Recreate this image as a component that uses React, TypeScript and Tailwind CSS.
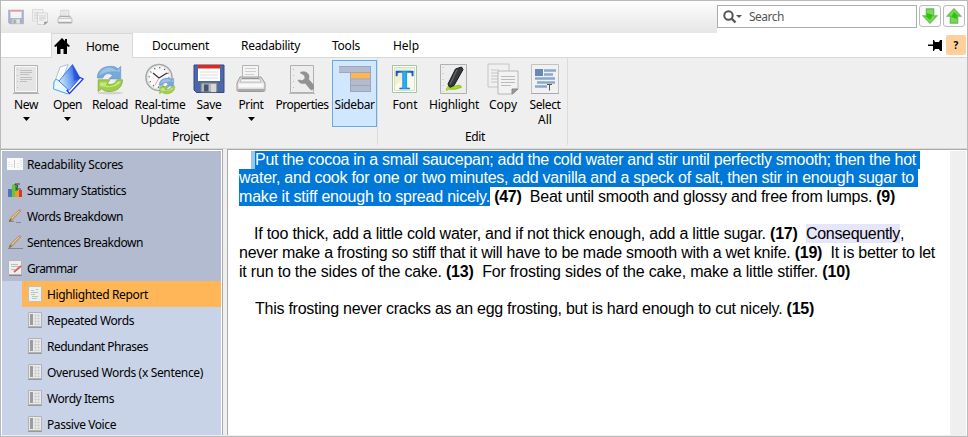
import React, { useLayoutEffect, useRef, useState } from 'react';

const UI = "font-['Noto_Sans','Open_Sans',sans-serif]";

/** One line of text, tracked so that it fills the given width. */
function Fit({ w, children, className = '' }: { w: number; children: React.ReactNode; className?: string }) {
  const ref = useRef<HTMLSpanElement>(null);
  const [ls, setLs] = useState(0);
  useLayoutEffect(() => {
    const el = ref.current;
    if (!el) return;
    const n = (el.textContent || '').length;
    el.style.letterSpacing = '0px';
    const v = (w - el.getBoundingClientRect().width) / n;
    el.style.letterSpacing = v + 'px';
    setLs(v);
  }, [w]);
  return (
    <span ref={ref} className={'inline-block whitespace-pre ' + className} style={{ letterSpacing: ls }}>
      {children}
    </span>
  );
}

type IP = { className?: string };

const Floppy = ({ className = 'size-8' }: IP) => (
  <svg viewBox="0 0 32 32" className={className}>
    <path d="M1 2h30v27.500H3.500L1 27z" fill="#4c67a8" stroke="#34497f" />
    <path d="M5 2h22v16H5z" fill="#fff" />
    <path d="M5 2h22v3.500H5z" fill="#de2a1c" />
    <path d="M7 9h18M7 12h18M7 15h18" stroke="#ddd" />
    <path d="M8 20h16v9H8z" fill="#b4b9bd" stroke="#737a85" />
    <path d="M11 21.500h4.500v7H11z" fill="#46536c" />
    <path d="M18 21h5v8h-5z" fill="#d8d9d6" />
  </svg>
);
const Printer = ({ className = 'size-8' }: IP) => (
  <svg viewBox="0 0 32 32" className={className}>
    <path d="M7.500 2.500h16v13h-16z" fill="#f4f4f4" stroke="#b4b4b4" />
    <path d="M10 5.500h11M10 8.500h11M10 11.500h9" stroke="#cecece" />
    <path d="M5 14h21l4 6v7q0 1.500-1.500 1.500h-25Q2 28.500 2 27v-7z" fill="#ddd" stroke="#9a9a9a" />
    <path d="M7 15h17l2 3.500H5z" fill="#8b8b8b" />
    <path d="M6 16h19l1 3H5z" fill="#f6f6f6" stroke="#aaa" strokeWidth=".6" />
    <path d="M3.500 20.500h25v4h-25z" fill="#f9f9f9" />
    <path d="M3 27h26" stroke="#aaa" strokeWidth="2" />
  </svg>
);
const Pages = ({ className = 'size-8' }: IP) => (
  <svg viewBox="0 0 32 32" className={className}>
    <path d="M1 1h21v23H1z" fill="#f0f0f0" stroke="#c4c4c4" />
    <path d="M4 7h8M4 10h8M4 13h8M4 16h8M4 19h8" stroke="#c6c6c6" />
    <path d="M11 8h20v18l-5 5H11z" fill="#f2f2f2" stroke="#b8b8b8" />
    <path d="M14 13.500h14M14 16.500h14M14 19.500h14M14 22.500h10" stroke="#bababa" />
    <path d="M31 26h-6v5z" fill="#999" stroke="#888" />
  </svg>
);
const NewDoc = () => (
  <svg viewBox="0 0 32 32" className="size-8">
    <path d="M4.500 2.500h23v27h-23z" fill="#e5e5e5" stroke="#b2b2b2" />
    <path d="M5.500 3.500h21v25h-21z" fill="none" stroke="#f9f9f9" />
    <path d="M10 7.500h12M10 9.500h12M10 11.500h9M10 14.500h12M10 16.500h12M10 18.500h7" stroke="#c0c0c0" />
    <path d="M7.500 6v20" stroke="#bbb" strokeDasharray="1 5" />
    <path d="M3 30.500h26" stroke="#b2b2b2" />
  </svg>
);
const OpenBook = () => (
  <svg viewBox="0 0 32 32" className="size-8">
    <defs>
      <linearGradient id="book" x1="0" y1=".6" x2="1" y2=".3">
        <stop stopColor="#d3ecff" /><stop offset=".45" stopColor="#75abf5" /><stop offset="1" stopColor="#1740d8" />
      </linearGradient>
    </defs>
    <path d="M8 4l8-2.500-5 14L2 21z" fill="#fbfdff" stroke="#a8c4e2" />
    <path d="M2 19l2-3 14 9-2 6L1.500 26z" fill="#e6f7ff" stroke="#44a4ee" />
    <path d="M28 14.500l3 1.500-13.500 14.500-2.500-3z" fill="#fff" stroke="#2a3cf2" strokeWidth="1.300" />
    <path d="M20.500 1.500L28 15 17 27.500 7 18z" fill="url(#book)" stroke="#2b63e0" strokeWidth=".8" />
    <path d="M20.500 1.500L28 15l-6 3z" fill="#1c46d8" opacity=".55" />
  </svg>
);
const ReloadArt = () => (
  <>
    <path d="M2 15C2 6 9 2 17 2c4 0 6 1 8 3l3-3v14H15l4-4c-5-4-9-1-11 3z" fill="#76a9d8" stroke="#6c9ac6" strokeWidth=".8" />
    <path d="M4 12C6 5 13 2 19 4l5 3 3-3v4q-12-2-23 4" fill="#9cc2e5" />
    <path d="M30 17c0 9-7 13-15 13-4 0-6-1-8-3l-4 3V17h13l-3 4c5 3 9 0 11-4z" fill="#9fcf45" stroke="#7aa83c" strokeWidth=".8" />
    <path d="M5 20h8l-2 3c5 3 11 0 14-4h3c-2 5-12 8-23 5z" fill="#c9e583" />
  </>
);
const Reload = () => (
  <svg viewBox="0 0 32 32" className="size-8">
    <ellipse cx="16" cy="30" rx="13" ry="1.500" fill="#d3d3d3" />
    <g transform="translate(1.500 1.500) scale(.9)"><ReloadArt /></g>
  </svg>
);
const Clock = () => (
  <svg viewBox="0 0 32 32" className="size-8">
    <circle cx="15" cy="14.500" r="13" fill="#fafafa" stroke="#a8a8a8" strokeWidth="1.600" />
    <circle cx="15" cy="14.500" r="11.600" fill="none" stroke="#e0e0e0" />
    <circle cx="15" cy="14.500" r="9.800" fill="none" stroke="#555" strokeWidth="1.500" strokeDasharray="1 4.130" />
    <path d="M9 10l6 5 8-5" fill="none" stroke="#333" strokeWidth="1.200" />
    <path d="M15 15l-4 7" stroke="#e99" />
    <g transform="translate(14 14) scale(.56)"><ReloadArt /></g>
  </svg>
);
const Properties = () => (
  <svg viewBox="0 0 32 32" className="size-8">
    <path d="M4.500 2.500h23v27h-23z" fill="#ededed" stroke="#b0b0b0" />
    <path d="M7.500 6v20" stroke="#bbb" strokeDasharray="1 5" />
    <path d="M14 9.500c4-2 9 0 9 4 0 1 0 1.500-.5 2.500l5 6v4l-2.500 1-6-7c-3 1.500-6 0-7-3l4.500.5 2.500-2-.5-3z" fill="#929292" stroke="#858585" strokeWidth=".5" />
    <path d="M3 30.500h26" stroke="#b9b9b9" />
  </svg>
);
const SidebarIcon = () => (
  <svg viewBox="0 0 32 32" className="size-8">
    <path d="M0 3h32v7H0z" fill="#b3bbd0" /><path d="M11 10h21v6H11z" fill="#ffb652" />
    <path d="M11 16h21v13H11z" fill="#b3bbd0" />
    <path d="M0 3.500h32M0 9.500h32M11 16h21M11 22.500h21M11 28.500h21M11.500 10v19M31.500 3v26" stroke="#9ea6b9" />
  </svg>
);
const FontIcon = () => (
  <svg viewBox="0 0 32 32" className="size-8">
    <defs><linearGradient id="tee" x1="0" x2="1"><stop stopColor="#0729be" /><stop offset=".5" stopColor="#22b7f5" /><stop offset="1" stopColor="#0b43c6" /></linearGradient></defs>
    <path d="M3.500 2.500h24v27h-24z" fill="#fff" stroke="#a5c5a4" />
    <path d="M5.500 4.500h20v23h-20z" fill="#edf0d2" stroke="#d5e2c4" />
    <path d="M6 23L25 5v22H6z" fill="#fafae9" />
    <text x="15.500" y="26" textAnchor="middle" fill="url(#tee)" stroke="#125dca" strokeWidth=".4" className="font-['Liberation_Serif',serif] text-[27px] font-bold">T</text>
  </svg>
);
const Highlighter = () => (
  <svg viewBox="0 0 32 32" className="size-8">
    <path d="M2.500 1.500h26v29h-26z" fill="#ededed" stroke="#b0b0b0" />
    <path d="M5 4v25" stroke="#bbb" strokeDasharray="1 5" />
    <path d="M8 27q8-4 10-4 5-1 5 1-2 1-6 2H8" fill="#b4db55" stroke="#9acb22" strokeWidth="1.600" />
    <path d="M17.500 6l6-2 1.500 2.500-9 16-4.500 2-1.500-3.500z" fill="#34373b" stroke="#16181a" />
    <path d="M18 7l2-1-7 15-2 1z" fill="#626568" />
    <path d="M9 23l3.500 2-4 3.500z" fill="#a9dd28" />
  </svg>
);
const SelectAll = () => (
  <svg viewBox="0 0 32 32" className="size-8">
    <path d="M2.500 1.500h27v29h-27z" fill="#f1f1f1" stroke="#c2c2c2" />
    <path d="M6 6h8v7H6z" fill="#6689b7" />
    <path d="M15 7.500h12M15 11.500h9M6 15.500h20M8 19.500h18M6 23.500h12" stroke="#89a8cd" strokeWidth="2.500" />
    <path d="M18 21.500h5M20.500 21.500v6" stroke="#555" />
    <path d="M2 30.500h28" stroke="#aaa" />
  </svg>
);

type Action = { icon: React.ReactNode; label: string; w: number; label2?: string; w2?: number; arrow?: boolean; box: string; active?: boolean };
const project: Action[] = [
  { icon: <NewDoc />, label: 'New', w: 24, arrow: true, box: 'w-[42px]' },
  { icon: <OpenBook />, label: 'Open', w: 29, arrow: true, box: 'w-[41px]' },
  { icon: <Reload />, label: 'Reload', w: 36, box: 'w-[44px]' },
  { icon: <Clock />, label: 'Real-time', w: 51, label2: 'Update', w2: 39, box: 'w-[56px]' },
  { icon: <Floppy />, label: 'Save', w: 25, arrow: true, box: 'w-[42px]' },
  { icon: <Printer />, label: 'Print', w: 25, arrow: true, box: 'w-[42px]' },
  { icon: <Properties />, label: 'Properties', w: 53, box: 'w-[60px]' },
  { icon: <SidebarIcon />, label: 'Sidebar', w: 40, box: 'w-[45px]', active: true },
];
const edit: Action[] = [
  { icon: <FontIcon />, label: 'Font', w: 25, box: 'w-[42px]' },
  { icon: <Highlighter />, label: 'Highlight', w: 50, box: 'w-[56px]' },
  { icon: <Pages />, label: 'Copy', w: 28, box: 'w-[42px]' },
  { icon: <SelectAll />, label: 'Select', w: 31, label2: 'All', w2: 14, box: 'w-[42px]' },
];

function Tool({ a }: { a: Action }) {
  return (
    <div className={`${a.box} flex h-[67px] shrink-0 flex-col items-center border pt-[2px] ${a.active ? 'border-[#66aae4] bg-[#d0e7fd]' : 'border-transparent'}`}>
      <div className="flex h-8 shrink-0">{a.icon}</div>
      <div className="mt-px h-[16px] shrink-0 leading-[18px]"><Fit w={a.w}>{a.label}</Fit></div>
      {a.label2 && <div className="h-[16px] shrink-0 leading-[16px]"><Fit w={a.w2!} className="h-4">{a.label2}</Fit></div>}
      {a.arrow && <svg viewBox="0 0 7 4" className="mt-[5px] h-[4px] w-[7px]"><path d="M0 0h7L3.500 4z" /></svg>}
    </div>
  );
}

const ScoreIcon = () => (
  <svg viewBox="0 0 16 16" className="size-4">
    <path d="M0 2h16v12H0z" fill="#fafafa" /><path d="M2 6v6M5 8v4M11 7v5M14 4v8" stroke="#d3d5d8" strokeDasharray="1 1" /><path d="M7.500 4v8" stroke="#ccc" />
  </svg>
);
const StatsIcon = () => (
  <svg viewBox="0 0 16 16" className="size-4">
    <path d="M1 7h4v8H1z" fill="#4a77b5" /><path d="M5 3l3-1 3 2v11H5z" fill="#40a52f" /><path d="M5 3h3v12H5z" fill="#68c33d" /><path d="M8 9h4v6H8z" fill="#f29a22" /><path d="M12 8h3v7h-3z" fill="#d93825" /><path d="M8 2h5M8 2l3 2-2 3h5" stroke="#4a4335" fill="none" />
  </svg>
);
const Pencil = ({ long }: { long?: boolean }) => (
  <svg viewBox="0 0 16 16" className="size-4">
    <path d={long ? 'M1 14.500h15' : 'M2 13.500h5M9 14.500h5'} stroke="#818897" />
    <path d="M12 2l1.500 1-8 9-3.500 2 1.500-4z" fill="#d9a45e" stroke="#a98352" strokeWidth=".6" />
    <path d="M12 2l1-1 1.500 1-1 2z" fill="#e38a7b" /><path d="M2 14l1-3 2 1z" fill="#666" />
    <path d="M5 10l7-7" stroke="#f0c88b" />
  </svg>
);
const GrammarIcon = () => (
  <svg viewBox="0 0 16 16" className="size-4">
    <path d="M1.500.500h13v14h-13z" fill="#eee" stroke="#b6b6b6" /><path d="M4 4.500h7M4 6.500h8M4 9.500h4" stroke="#bbb" /><path d="M14 6l-7 6" stroke="#df5a58" strokeWidth="1.700" /><path d="M2 15.500h13" stroke="#888" />
  </svg>
);
const ReportIcon = () => (
  <svg viewBox="0 0 16 16" className="size-4">
    <path d="M1.500.500h13v15h-13z" fill="#eee" stroke="#c4c0b6" /><path d="M4 4.500h3M9 3.500h2M4 6.500h7M4 8.500h4M5 10.500h6M5 12.500h5" stroke="#b5c9b8" />
  </svg>
);
const ListIcon = () => (
  <svg viewBox="0 0 16 16" className="size-4">
    <path d="M1.500.500h13v14h-13z" fill="#e9e9e9" stroke="#b2b2b2" /><path d="M3 2h3v11H3z" fill="#9a9ca0" /><path d="M7 3.500h6M7 6.500h6M7 9.500h6M7 12.500h6M8.500 2v11M11.500 2v11" stroke="#cecece" strokeWidth=".8" /><path d="M1 15.500h14" stroke="#999" />
  </svg>
);

const nav: [string, number, React.ReactNode][] = [
  ['Readability Scores', 96, <ScoreIcon />],
  ['Summary Statistics', 99, <StatsIcon />],
  ['Words Breakdown', 96, <Pencil />],
  ['Sentences Breakdown', 116, <Pencil long />],
  ['Grammar', 50, <GrammarIcon />],
];
const sub: [string, number][] = [
  ['Highlighted Report', 101], ['Repeated Words', 87], ['Redundant Phrases', 101],
  ['Overused Words (x Sentence)', 156], ['Wordy Items', 67], ['Passive Voice', 69],
];

const GreenArrow = ({ up }: { up?: boolean }) => (
  <div className="flex h-[22px] w-[22px] items-center justify-center rounded-[3px] border border-[#bcbcbc] bg-[#fbfbfb]">
    <svg viewBox="0 0 16 16" className={up ? 'size-4' : 'size-4 rotate-180'}>
      <path d="M8 .3L15.700 8.500H12V15.500H4V8.500H.3z" fill="#58c43c" stroke="#7fba76" strokeWidth=".6" />
      <path d="M8 1.500l5.500 6H11v7H5v-7H2.500z" fill="#7ad65c" /><path d="M8 4l4.500 4H11v3L5 9z" fill="#2fc40c" />
    </svg>
  </div>
);

const tabs: [string, number, string][] = [['Document', 57, 'ml-[19px]'], ['Readability', 59, 'ml-[32px]'], ['Tools', 28, 'ml-[32px]'], ['Help', 26, 'ml-[33px]']];

export default function App() {
  return (
    <div className={`flex h-[437px] w-[968px] flex-col overflow-hidden border border-[#bababa] bg-[#efefef] text-[12px] text-black ${UI}`}>
      <div className="flex h-8 shrink-0 bg-white">
        <div className="flex w-[716px] items-center bg-linear-to-b from-[#fdfdfd] to-[#e6e6e6] pl-[7px]">
          <Floppy className="size-4 opacity-45" />
          <Pages className="ml-2 size-4" />
          <Printer className="ml-[9px] size-4" />
        </div>
        <div className="mt-1 flex h-[23px] w-[200px] items-center border border-[#a9abb0] bg-white pl-[5px]">
          <svg viewBox="0 0 20 14" className="h-[14px] w-5" fill="none" stroke="#555">
            <circle cx="5.500" cy="5.500" r="4.200" strokeWidth="2" /><path d="M8.500 8.500l4 4" strokeWidth="2.400" /><path d="M13 5h6l-3 3z" fill="#555" stroke="none" />
          </svg>
          <Fit w={35} className="ml-[6px] text-[#555]">Search</Fit>
        </div>
        <div className="ml-[2px] mt-1 flex gap-[2px]"><GreenArrow /><GreenArrow up /></div>
      </div>

      <div className="flex h-[25px] shrink-0 bg-white">
        <div className="w-[50px] border-b border-[#d8d8d8]" />
        <div className="flex w-[82px] items-center border-x border-t border-[#d8d8d8] bg-[#efefef] pl-[2px]">
          <svg viewBox="0 0 16 16" className="size-4"><path d="M0 8l8-8 3 3V1h2v4l3 3-1.500 1L13 8v8H9.500v-5h-3v5H3V8L1.500 9z" /></svg>
          <Fit w={33} className="ml-[16px] pt-px">Home</Fit>
        </div>
        <div className="flex flex-1 items-center border-b border-[#d8d8d8]">
          {tabs.map(([t, w, m]) => <Fit key={t} w={w} className={m + ' pt-[2px]'}>{t}</Fit>)}
          <div className="ml-auto flex items-center">
            <svg viewBox="0 0 14 12" className="mr-[4px] h-3 w-[14px]"><path d="M0 5.500h5V1h1l1 2h4l1-2h2v11h-2l-1-2H7l-1 2H5V7H0z" /></svg>
            <div className="mr-px flex h-[20px] w-[20px] items-center justify-center rounded-[2px] bg-[#ffd099] text-[10px] font-bold">?</div>
          </div>
        </div>
      </div>

      <div className="flex h-[91px] shrink-0 border-b border-[#d9d9d9]">
        <div className="flex h-[87px] w-[377px] flex-col border-r border-[#dcdcdc] pl-1 pt-[2px]">
          <div className="flex">{project.map((a) => <Tool key={a.label} a={a} />)}</div>
          <div className="pl-[167px] pt-[2px] leading-[15px]"><Fit w={37}>Project</Fit></div>
        </div>
        <div className="flex h-[87px] w-[190px] flex-col border-r border-[#dcdcdc] pl-[6px] pt-[2px]">
          <div className="flex">{edit.map((a) => <Tool key={a.label} a={a} />)}</div>
          <div className="pl-[81px] pt-[2px] leading-[15px]"><Fit w={20}>Edit</Fit></div>
        </div>
      </div>

      <div className="flex h-[286px] shrink-0">
        <div className="w-[222px] shrink-0 border-r border-t border-[#aaa] bg-white pl-px pr-px pt-px">
          <div className="h-[284px] overflow-hidden bg-[#c8d3e8]">
            {nav.map(([t, w, icon]) => (
              <div key={t} className="flex h-[26px] items-center bg-[#b2bbd0] pl-[5px]">{icon}<Fit w={w} className="ml-1 pt-[2px]">{t}</Fit></div>
            ))}
            {sub.map(([t, w], i) => (
              <div key={t} className={`ml-[20px] flex h-[26px] items-center pl-[5px] ${i === 0 ? 'bg-[#ffb656]' : ''}`}>
                {i === 0 ? <ReportIcon /> : <ListIcon />}<Fit w={w} className="ml-1 pt-[2px]">{t}</Fit>
              </div>
            ))}
          </div>
        </div>
        <div className="ml-[4px] flex flex-1 border-l border-t border-[#aaa] bg-white pt-px">
          <div className="flex-1 pl-[11px] font-['Liberation_Sans',Arial,sans-serif] text-[16px]">
            <div className="flex h-[18px] pl-[12px] leading-[18px]">
              <span className="h-[18px] w-[4px] bg-[#99c8ee]" />
              <span className="h-[18px] w-[665px] bg-[#0078d7] text-white"><Fit w={661}>Put the cocoa in a small saucepan; add the cold water and stir until perfectly smooth; then the hot</Fit></span>
            </div>
            <div className="h-[18px] w-[679px] bg-[#0078d7] leading-[18px] text-white"><Fit w={675}>water, and cook for one or two minutes, add vanilla and a speck of salt, then stir in enough sugar to</Fit></div>
            <div className="flex h-[19px] leading-[19px]">
              <span className="h-[19px] w-[251px] bg-[#0078d7] text-white"><Fit w={251}>make it stiff enough to spread nicely.</Fit></span>
              <Fit w={405}> <b>(47)</b>  Beat until smooth and glossy and free from lumps. <b>(9)</b></Fit>
            </div>
            <div className="mt-[18px] flex h-[19px] pl-[15px] leading-[19px]">
              <Fit w={552}>If too thick, add a little cold water, and if not thick enough, add a little sugar. <b>(17)</b>  </Fit>
              <span className="h-[19px] bg-[#e6e6fa]"><Fit w={94}>Consequently</Fit></span><span>,</span>
            </div>
            <div className="h-[19px] leading-[19px]"><Fit w={696}>never make a frosting so stiff that it will have to be made smooth with a wet knife. <b>(19)</b>  It is better to let</Fit></div>
            <div className="h-[19px] leading-[19px]"><Fit w={611}>it run to the sides of the cake. <b>(13)</b>  For frosting sides of the cake, make a little stiffer. <b>(10)</b></Fit></div>
            <div className="mt-[18px] h-[19px] pl-[16px] leading-[19px]"><Fit w={559}>This frosting never cracks as an egg frosting, but is hard enough to cut nicely. <b>(15)</b></Fit></div>
          </div>
          <div className="mr-px w-[16px] bg-[#efefef]" />
        </div>
      </div>
    </div>
  );
}
